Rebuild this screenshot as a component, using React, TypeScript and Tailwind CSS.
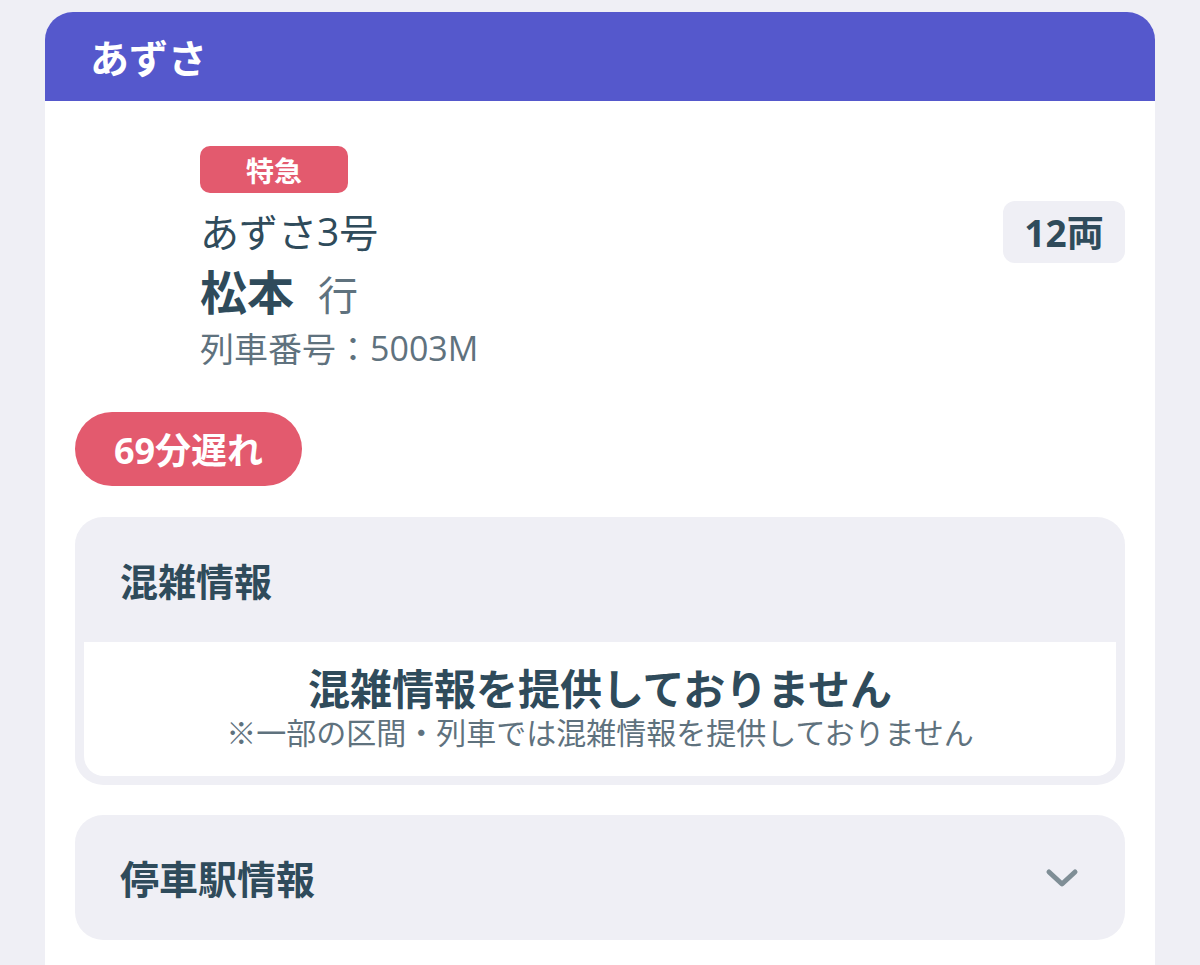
import React from 'react';

const font = { fontFamily: '"Noto Sans CJK JP", "Noto Sans", sans-serif' };
// 数字・英字は少し幅広に見せる
const latin = { fontFamily: '"Open Sans", "Noto Sans CJK JP", sans-serif' };

function ChevronDown() {
    return (
        <svg width="34" height="22" viewBox="0 0 34 22" fill="none">
            <path d="M4 5 L17 17 L30 5" stroke="#7f8e96" strokeWidth="5" strokeLinecap="round" strokeLinejoin="round" />
        </svg>
    );
}

export default function App() {
    return (
        <div className="min-h-[965px] bg-[#efeff5] pt-[12px] px-[45px] overflow-hidden" style={font}>
            <div className="bg-white rounded-t-[28px] overflow-hidden min-h-[960px]">
                {/* ヘッダー */}
                <div className="h-[89px] bg-[#5558cc] flex items-center pl-[45px]">
                    <h1 className="text-[39px] font-bold text-white leading-none">あずさ</h1>
                </div>

                <div className="px-[30px] pt-[45px]">
                    {/* 列車情報 */}
                    <div className="flex justify-between">
                        <div className="pl-[125px]">
                            <div className="w-[148px] h-[47px] rounded-[10px] bg-[#e35a6e] flex items-center justify-center">
                                <span className="text-[28px] font-bold text-white leading-none">特急</span>
                            </div>
                            <div className="mt-[15px] h-[44px] flex items-center text-[39px] leading-none text-[#2f4b5b] whitespace-nowrap">
                                あずさ<span style={latin}>3</span>号
                            </div>
                            <div className="mt-[12px] flex items-baseline h-[52px]">
                                <span className="text-[47px] font-bold text-[#2f4b5b] leading-[52px]">松本</span>
                                <span className="ml-[24px] text-[40px] text-[#5f727e] leading-[52px]">行</span>
                            </div>
                            <div className="mt-[12px] h-[40px] flex items-center text-[34px] leading-none text-[#5f727e] whitespace-nowrap">
                                列車番号：<span style={latin}>5003M</span>
                            </div>
                        </div>
                        <div className="mt-[55px] w-[122px] h-[62px] rounded-[12px] bg-[#efeff5] flex items-center justify-center">
                            <span className="text-[37px] font-bold text-[#2f4b5b] leading-none">
                                <span style={latin}>12</span>両
                            </span>
                        </div>
                    </div>

                    {/* 遅延 */}
                    <div className="mt-[44px] w-[227px] h-[74px] rounded-full bg-[#e35a6e] flex items-center justify-center">
                        <span className="text-[36px] font-bold text-white leading-none">
                            <span style={latin}>69</span>分遅れ
                        </span>
                    </div>

                    {/* 混雑情報 */}
                    <div className="mt-[31px] rounded-[28px] bg-[#efeff5] px-[9px] pb-[9px]">
                        <div className="h-[125px] flex items-center pl-[36px]">
                            <h2 className="text-[38px] font-bold text-[#2f4b5b] leading-none">混雑情報</h2>
                        </div>
                        <div className="h-[134px] bg-white rounded-b-[20px] flex flex-col items-center pt-[22px]">
                            <p className="text-[42px] font-bold text-[#2f4b5b] leading-[46px]">混雑情報を提供しておりません</p>
                            <p className="mt-[4px] text-[30px] text-[#5f727e] leading-[34px]">※一部の区間・列車では混雑情報を提供しておりません</p>
                        </div>
                    </div>

                    {/* 停車駅情報 */}
                    <div className="mt-[30px] h-[125px] rounded-[28px] bg-[#efeff5] flex items-center justify-between pl-[45px] pr-[46px]">
                        <h2 className="text-[39px] font-bold text-[#2f4b5b] leading-none">停車駅情報</h2>
                        <ChevronDown />
                    </div>
                </div>
            </div>
        </div>
    );
}
